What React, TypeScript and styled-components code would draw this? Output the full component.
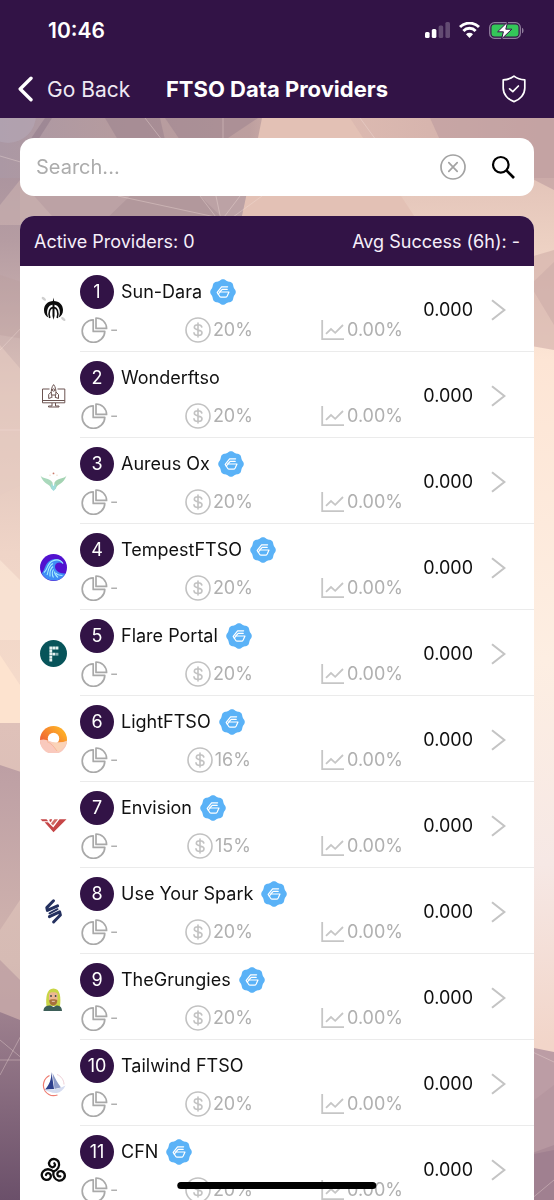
import React from 'react';
import styled, { createGlobalStyle } from 'styled-components';

const PURPLE = '#321346';

const GlobalStyle = createGlobalStyle`
  * { box-sizing: border-box; }
  body {
    margin: 0;
    background: #ecd3c8;
    font-family: Inter, 'Liberation Sans', sans-serif;
    color: #111;
  }
  button, input { font: inherit; color: inherit; }
  button { background: none; border: 0; padding: 0; cursor: pointer; }
  svg { display: block; flex: none; }
`;

const Screen = styled.div`
  height: 100vh;
  display: flex;
  flex-direction: column;
  overflow: hidden;
`;

const Backdrop = styled.div`
  position: fixed;
  inset: 0;
  z-index: -1;
  svg { width: 100%; height: 100%; }
`;

const TopBar = styled.header`
  background: ${PURPLE};
  color: #fff;
  flex: none;
`;

const StatusBar = styled.div`
  height: 60px;
  padding: 0 30px 0 48px;
  display: flex;
  align-items: center;
  justify-content: space-between;
  font-size: 21px;
  font-weight: 600;
`;

const StatusIcons = styled.div`
  display: flex;
  align-items: center;
  gap: 9px;
`;

const NavBar = styled.nav`
  height: 58px;
  padding: 0 18px;
  display: grid;
  grid-template-columns: 1fr auto 1fr;
  align-items: center;
`;

const BackButton = styled.button`
  justify-self: start;
  display: flex;
  align-items: center;
  gap: 14px;
  font-size: 21px;
  color: #efe8f3;
`;

const Title = styled.h1`
  margin: 0;
  font-size: 22px;
  font-weight: 700;
`;

const ShieldButton = styled.button`
  justify-self: end;
  margin-right: 10px;
`;

const Content = styled.main`
  flex: 1;
  min-height: 0;
  padding: 20px 20px 0;
  display: flex;
  flex-direction: column;
  gap: 20px;
  overflow-y: auto;
  scrollbar-width: none;
`;

const SearchBox = styled.form`
  flex: none;
  height: 58px;
  padding: 0 18px 0 16px;
  display: flex;
  align-items: center;
  gap: 25px;
  background: #fff;
  border-radius: 14px;
`;

const SearchInput = styled.input`
  flex: 1;
  min-width: 0;
  padding: 0;
  border: 0;
  outline: 0;
  background: none;
  font-size: 20px;
  &::placeholder { color: #acacac; opacity: 1; }
`;

const Card = styled.section`
  flex: none;
  background: #fff;
  border-radius: 14px 14px 0 0;
  overflow: hidden;
`;

const Summary = styled.div`
  height: 50px;
  padding: 0 14px;
  display: flex;
  align-items: center;
  justify-content: space-between;
  background: ${PURPLE};
  color: #f6effa;
  font-size: 18px;
`;

const List = styled.ul`
  margin: 0;
  padding: 0;
  list-style: none;
`;

const Row = styled.button`
  width: 100%;
  height: 86px;
  display: flex;
  text-align: left;
`;

const LogoCell = styled.span`
  flex: none;
  width: 60px;
  padding-left: 20px;
  align-self: center;
`;

const RowBody = styled.span`
  flex: 1;
  min-width: 0;
  height: 86px;
  padding-right: 28px;
  display: flex;
  align-items: center;
  border-bottom: 1px solid #ebebeb;
`;

const Details = styled.span`
  flex: 1;
  min-width: 0;
  display: flex;
  flex-direction: column;
  gap: 8px;
`;

const NameLine = styled.span`
  display: flex;
  align-items: center;
  font-size: 18px;
`;

const Rank = styled.span`
  width: 34px;
  height: 34px;
  margin-right: 7px;
  display: flex;
  align-items: center;
  justify-content: center;
  border-radius: 50%;
  background: ${PURPLE};
  color: #fff;
`;

const Name = styled.span`
  margin-right: 8px;
`;

const Stats = styled.span`
  display: grid;
  grid-template-columns: 30fr 26fr 44fr;
`;

const Stat = styled.span<{ $align: string }>`
  display: flex;
  align-items: center;
  justify-content: ${(p) => p.$align};
  gap: 2px;
  color: #b0b0b0;
  font-size: 18px;
`;

const Value = styled.span`
  width: 70px;
  padding-top: 2px;
  text-align: right;
  font-size: 18px;
`;

const ChevronCell = styled.span`
  margin-left: 18px;
  padding-top: 2px;
`;

const HomeIndicator = styled.div`
  position: fixed;
  left: 50%;
  bottom: 11px;
  width: 36%;
  height: 7px;
  transform: translateX(-50%);
  border-radius: 4px;
  background: #000;
`;

const Wallpaper = () => (
  <svg viewBox="0 0 554 1200" preserveAspectRatio="none" aria-hidden="true">
    <defs>
      <linearGradient id="wl" x1="0" y1="0" x2="0" y2="1">
        <stop offset="0.1" stopColor="#a48f9c" />
        <stop offset="0.2" stopColor="#b59ca2" />
        <stop offset="0.33" stopColor="#dcc2ba" />
        <stop offset="0.46" stopColor="#efd4c7" />
        <stop offset="0.6" stopColor="#f6dccb" />
      </linearGradient>
      <linearGradient id="wr" x1="0" y1="0" x2="0" y2="1">
        <stop offset="0.1" stopColor="#dbb9b1" />
        <stop offset="0.2" stopColor="#ecd0c2" />
        <stop offset="0.3" stopColor="#fde5d5" />
        <stop offset="0.55" stopColor="#fdeee2" />
        <stop offset="0.72" stopColor="#f6e8e5" />
        <stop offset="0.87" stopColor="#f2d5c9" />
      </linearGradient>
      <linearGradient id="wb" x1="0" y1="0" x2="0" y2="1">
        <stop offset="0" stopColor="#dfc1b9" />
        <stop offset="0.5" stopColor="#d6bbb4" />
        <stop offset="1" stopColor="#c3a3a5" />
      </linearGradient>
      <linearGradient id="wm" x1="0" y1="0" x2="0" y2="1">
        <stop offset="0" stopColor="#bd9fa4" />
        <stop offset="1" stopColor="#ceb1ad" />
      </linearGradient>
      <linearGradient id="wd" x1="0" y1="0" x2="0" y2="1">
        <stop offset="0" stopColor="#9d808e" />
        <stop offset="1" stopColor="#6b506a" />
      </linearGradient>
      <linearGradient id="top" x1="0" y1="0" x2="1" y2="0">
        <stop offset="0" stopColor="#ab98a4" />
        <stop offset="0.2" stopColor="#b59b9f" />
        <stop offset="0.45" stopColor="#bd9f9f" />
        <stop offset="0.55" stopColor="#dfbcb2" />
        <stop offset="1" stopColor="#cfaeaa" />
      </linearGradient>
    </defs>
    <rect width="277" height="1200" fill="url(#wl)" />
    <rect x="277" width="277" height="1200" fill="url(#wr)" />
    <rect y="118" width="554" height="60" fill="url(#top)" />
    <path d="M20 178H250L240 225H20z" fill="#bca2a5" />
    <path d="M250 178L262 118H350L420 225H240z" fill="#e3c1b5" />
    <path d="M0 205L20 180L60 225H0z" fill="#cbb2b0" opacity=".6" />
    <path d="M100 225L130 196H200L230 225z" fill="#a88e94" opacity=".5" />
    <path d="M105 118H160L165 140H118z" fill="#957d89" opacity=".45" />
    <path d="M165 118H258L225 140H180z" fill="#937b89" opacity=".4" />
    <circle cx="8" cy="115" r="28" fill="#b5a9ba" opacity=".5" />
    <path d="M45 118L30 140H38L52 118z" fill="#8d7788" opacity=".5" />
    <path d="M430 118H554V190L515 170L440 140z" fill="#bd9b9f" opacity=".6" />
    <path d="M520 260L554 250V350L520 344z" fill="#d2b1aa" opacity=".65" />
    <path d="M530 285L554 262V325z" fill="#c8a7a3" opacity=".45" />
    <path d="M0 275L30 285V340L0 335z" fill="#b99f9f" opacity=".35" />
    <path d="M0 345L30 380V480L0 495z" fill="#e6cbc1" opacity=".6" />
    <path d="M0 560L30 590V640H0z" fill="#fbe5d6" opacity=".7" />
    <path d="M0 655L30 700V723H0z" fill="#fde3cf" />
    <path d="M0 723H30V1200H0z" fill="url(#wb)" />
    <path d="M0 765L30 775V885L0 930z" fill="url(#wm)" />
    <path d="M0 960L30 990V1030L0 1012z" fill="#b5969d" opacity=".6" />
    <path d="M0 1012L30 1024V1200H0z" fill="url(#wd)" />
    <path d="M524 1046L554 1052V1200H524z" fill="#bc9da5" />
    <path d="M524 1156L554 1145V1200H524z" fill="#a08090" />
    <path d="M524 1108L554 1085V1150L524 1156z" fill="#b2939d" opacity=".6" />
    <g stroke="#f5e2dc" strokeWidth="1" fill="none" opacity=".35">
      <path d="M0 156L24 163M145 118L162 140M223 118V140M118 196L220 218M200 196L222 225M222 225L216 196M240 196L218 225M222 225L262 196" />
      <path d="M0 350L24 325M0 430H24M0 1040L24 1060M0 1075L24 1030M0 1060H24M524 1048L554 1062M530 1200L554 1180M360 118L376 140" />
    </g>
  </svg>
);

const SignalIcon = () => (
  <svg width="25" height="16" viewBox="0 0 25 16" fill="#fff" aria-hidden="true">
    <rect x="0" y="10" width="4.600" height="6" rx="1.500" />
    <rect x="6.800" y="7" width="4.600" height="9" rx="1.500" />
    <rect x="13.600" y="3.600" width="4.600" height="12.400" rx="1.500" opacity=".24" />
    <rect x="20.400" y="0" width="4.600" height="16" rx="1.500" opacity=".24" />
  </svg>
);

const WifiIcon = () => (
  <svg width="21" height="16" viewBox="0 0 21 16" fill="none" stroke="#fff" strokeWidth="2.900" aria-hidden="true">
    <path d="M1 5.100a13.400 13.400 0 0 1 19 0" />
    <path d="M4.400 8.900a8.400 8.400 0 0 1 12.200 0" />
    <path d="M10.500 15.900L7 12.300a5 5 0 0 1 7 0z" fill="#fff" stroke="none" />
  </svg>
);

const BatteryIcon = () => (
  <svg width="35" height="17" viewBox="0 0 35 17" aria-hidden="true">
    <rect x="0.700" y="0.700" width="30.600" height="15.600" rx="4.800" fill="none" stroke="#8f7d9c" strokeWidth="1.300" />
    <rect x="2.500" y="2.500" width="27" height="12" rx="3" fill="#34c759" />
    <path d="M33 5.700v5.600c2-.8 2-4.800 0-5.600z" fill="#8f7d9c" />
    <path d="M18.600 0L8.600 9.800h5.800L12.600 17L22.800 7.200h-6z" fill="#fff" stroke={PURPLE} strokeWidth="1" strokeLinejoin="round" />
  </svg>
);

const BackIcon = () => (
  <svg width="15" height="26" viewBox="0 0 15 26" fill="none" stroke="#fff" strokeWidth="3.400" strokeLinecap="round" strokeLinejoin="round" aria-hidden="true">
    <path d="M13 2.200L2.200 13L13 23.800" />
  </svg>
);

const ShieldIcon = () => (
  <svg width="24" height="28" viewBox="0 0 24 28" fill="none" stroke="#fff" strokeWidth="1.700" strokeLinecap="round" strokeLinejoin="round" aria-hidden="true">
    <path d="M12 1.200C9 3.500 5 4.700 1.200 4.900V13C1.200 19.500 6 24.500 12 26.600C18 24.500 22.800 19.500 22.800 13V4.900C19 4.700 15 3.500 12 1.200z" />
    <path d="M7.600 13.800L10.800 16.700L16.400 11" />
  </svg>
);

const ClearIcon = () => (
  <svg width="26" height="26" viewBox="0 0 26 26" fill="none" stroke="#a3a3a3" strokeWidth="1.700" strokeLinecap="round" aria-hidden="true">
    <circle cx="13" cy="13" r="12" />
    <path d="M8.800 8.600L17.200 17.400M17.200 8.600L8.800 17.400" />
  </svg>
);

const SearchIcon = () => (
  <svg width="25" height="25" viewBox="0 0 25 25" fill="none" stroke="#000" strokeWidth="2.200" aria-hidden="true">
    <circle cx="9.800" cy="9.800" r="7.800" />
    <path d="M15.400 15.400L23 23" strokeWidth="2.700" />
  </svg>
);

const PieIcon = () => (
  <svg width="28" height="26" viewBox="0 0 28 26" fill="none" stroke="#a9a9a9" strokeWidth="1.700" strokeLinejoin="round" aria-hidden="true">
    <path d="M13.200 2.800A11.300 11.300 0 1 0 24.800 14.400H13.200z" />
    <path d="M16 1V11.400H26.600A10.500 10.500 0 0 0 16 1z" />
  </svg>
);

const DollarIcon = () => (
  <svg width="26" height="26" viewBox="0 0 26 26" fill="none" stroke="#c2c2c2" strokeWidth="1.600" strokeLinecap="round" aria-hidden="true">
    <circle cx="13" cy="13" r="12" />
    <path d="M16.800 10C16.500 8.400 15 7.700 13 7.700C10.800 7.700 9.300 8.700 9.300 10.300C9.300 14 17 11.800 17 15.700C17 17.400 15.400 18.400 13.100 18.400C10.800 18.400 9.200 17.500 9 15.800M13 6V20" />
  </svg>
);

const TrendIcon = () => (
  <svg width="24" height="22" viewBox="0 0 24 22" fill="none" stroke="#c6c6c6" strokeWidth="1.800" aria-hidden="true">
    <path d="M1.200 1V20.200H23" />
    <path d="M5 14.800L10 10L14.200 13.800L22 6" />
  </svg>
);

const ChevronIcon = () => (
  <svg width="15" height="22" viewBox="0 0 15 22" fill="none" stroke="#c4c4c4" strokeWidth="2.100" aria-hidden="true">
    <path d="M1 1.200L13.400 11L1 20.800" />
  </svg>
);

const BADGE_POINTS = Array.from({ length: 96 }, (_, i) => {
  const angle = (i / 96) * Math.PI * 2;
  const radius = 12.2 + 0.6 * Math.cos(angle * 8);
  return `${(13 + radius * Math.sin(angle)).toFixed(2)},${(13 - radius * Math.cos(angle)).toFixed(2)}`;
}).join(' ');

const VerifiedBadge = () => (
  <svg width="26" height="26" viewBox="0 0 26 26" role="img" aria-label="Verified">
    <polygon points={BADGE_POINTS} fill="#5ab2f7" />
    <g fill="none" stroke="#fff" strokeWidth="1.200" strokeLinejoin="round" strokeLinecap="round">
      <path d="M17.600 7.800H11.600L7.200 13.400L8.400 15.400M17.200 10.400H12.200L9.800 13" />
      <path d="M9.800 13H19L17.200 17Q16.600 18.200 15.400 18.200H11.200Q10.200 18.200 9.600 17.200L8.400 15.200z" />
    </g>
  </svg>
);

const logos: Record<string, React.ReactNode> = {
  sundara: (
    <>
      <path d="M13.500 5C7.500 5 4 9.300 4 14C4 17.500 5.500 20.200 8.400 21.600C5.500 16 7.500 8.800 13.500 8.600C19.500 8.800 21.500 16 18.600 21.600C21.500 20.200 23 17.500 23 14C23 9.300 19.500 5 13.500 5z" fill="#0c0c0c" />
      <path d="M9.800 22C7.900 16 10 11.600 13.500 11.600C17 11.600 19.100 16 17.200 22" fill="none" stroke="#0c0c0c" strokeWidth="1.600" />
      <path d="M13.500 1.500L14.500 7V20L13.500 23.800L12.500 20V7z" fill="#0c0c0c" />
      <g fill="#cfcfcf"><ellipse cx="3.800" cy="2.800" rx="2.600" ry="1.300" transform="rotate(40 3.800 2.800)" /><ellipse cx="23.300" cy="23" rx="2.600" ry="1.300" transform="rotate(40 23.300 23)" /></g>
    </>
  ),
  wonder: (
    <g fill="none" stroke="#6b5350" strokeWidth="1">
      <path d="M9.500 7H2.500V20.800H24.800V7H17.500M2.500 18.500H24.800M12 21V24H8.500V25H19V24H15.500V21" />
      <path d="M13.600 2.600C11.600 5 11 8 11.400 13H15.800C16.200 8 15.600 5 13.600 2.600zM11.200 10L8.700 12.500V16.500L11.400 15.500M16 10L18.500 12.500V16.500L15.800 15.500M11.800 13V16M15.400 13V16" />
      <circle cx="13.600" cy="8" r="1.200" />
    </g>
  ),
  aureus: (
    <>
      <path d="M0.500 7.500C3 11.500 9 9 12.500 14.500L13.500 22L11 20.500C10.500 16 3.500 16.500 0.500 7.500z" fill="#a9d8bb" />
      <path d="M26.500 7.500C24 11.500 18 9 14.500 14.500L13.500 22L16 20.500C16.500 16 23.500 16.500 26.500 7.500z" fill="#a3d3b2" />
      <path d="M11 15.500L13.500 18L16 15.500L15.500 21L13.500 23L11.600 21z" fill="#9fdcdc" />
      <circle cx="13.500" cy="5.400" r="0.900" fill="#c97a6a" />
      <path d="M9.500 7.200h1M16.500 7.200h1" stroke="#e8c9a8" />
    </>
  ),
  tempest: (
    <>
      <circle cx="13.500" cy="13.500" r="13.500" fill="#5212cf" />
      <path d="M1.500 19C5 17.500 4 9.500 11 6C16 3.500 21 5.500 23.500 10C20.500 7.800 17 8 15.500 10.500C13.500 15 18 20 25.500 19.500A13.500 13.500 0 0 1 1.500 19z" fill="#3f8ef5" />
      <g fill="none" stroke="#a5ecff" strokeWidth="1.100">
        <path d="M4 18.500C8 15.500 6.500 10 12.500 7C17 5 21 6.500 23 9.500" />
        <path d="M7 21C8.500 18 7.500 12.500 13 9.500M10 22.500C9.500 18 10.500 14.500 13 12.500M13.500 23.500C11.500 20 12.500 17 13.500 15.500M18 23.500C15.500 21.500 14.500 19.500 14.500 17.500M22.500 21.500C19.500 21.500 17 20.500 16 19" />
      </g>
    </>
  ),
  flare: (
    <>
      <circle cx="13.500" cy="13.500" r="13.500" fill="#07545a" />
      <g fill="#e6f3f2">
        <path d="M9.400 6.600h2.800v2.800H9.400zM12.500 6.600h2.800v2.800h-2.800zM15.600 6.600h2.800v2.800h-2.800zM9.400 9.700h2.800v2.800H9.400zM9.400 12.800h2.800v2.800H9.400zM12.500 12.800h2.800v2.800h-2.800zM9.400 15.900h2.800v2.800H9.400zM9.400 19h2.800v2.400H9.400z" />
        <path d="M15.600 12.800h2.800v2.800h-2.800z" opacity=".6" />
      </g>
    </>
  ),
  light: (
    <>
      <defs>
        <linearGradient id="sun" x1="0" y1="1" x2="1" y2="0">
          <stop offset="0.200" stopColor="#ee5a35" />
          <stop offset="0.800" stopColor="#fdab28" />
        </linearGradient>
      </defs>
      <circle cx="13.500" cy="13.500" r="13.500" fill="url(#sun)" />
      <circle cx="13.500" cy="12.500" r="5.700" fill="#fff" />
      <path d="M0 14C6 12 9 15.500 14 16.500C18 17 22 16.500 27 15A13.500 13.500 0 0 1 0 14z" fill="#f9c9bd" />
      <path d="M10 15.500C13 17 15 22 18 26C21 24.500 26 20 27 15C22 16.500 15 17.500 10 15.500z" fill="#fad3b8" />
      <path d="M7 15.500C11 17 14 21 17 25" fill="none" stroke="#f6b48e" strokeWidth="0.800" />
    </>
  ),
  envision: (
    <g fill="#c64647">
      <path d="M0.500 7.200H6.500L8.200 9.200H2.400z" />
      <path d="M4.600 10.200H8L13.300 15.400L19.500 7.200H26.500L13.500 20.300z" />
      <path d="M9.600 7.200H12.200L10.800 10.200L9.400 9z" />
      <path d="M14.400 7.200H18L13 13.600L11 11.600z" fill="#d06a64" />
    </g>
  ),
  spark: (
    <g fill="none" stroke="#24305f" strokeWidth="3" strokeLinecap="round" strokeLinejoin="round">
      <path d="M13.500 2.800L6.800 9.600L7.400 12.400L17.600 7.800" />
      <path d="M9.400 18.600L19.600 13.800L20.400 17L13.600 24" />
      <path d="M9.500 15.300L17.500 11.200" strokeWidth="2" />
    </g>
  ),
  grungies: (
    <>
      <path d="M6.500 22C5.500 14 6.500 4.500 13.500 4.500C20.500 4.500 21 14 20 22z" fill="#c9d546" />
      <path d="M9 10C9 7.500 17.500 7.500 17.500 10V16C17.500 20 9 20 9 16z" fill="#edb793" />
      <path d="M9.300 16C10 15 16.500 15 17.200 16C17.500 20 15 21.500 13.300 21.500C11.500 21.500 9 20 9.300 16z" fill="#a8713c" />
      <path d="M11.800 17.300h3" stroke="#f5d6c4" strokeWidth="0.900" />
      <circle cx="11" cy="12" r="0.900" fill="#33434a" /><circle cx="15.600" cy="12" r="0.900" fill="#33434a" />
      <path d="M3.500 27C3.500 22.500 7 21.500 10.500 21.500L13.500 23L16.500 21.500C19 21.500 22 22.500 22 27z" fill="#3d5f58" />
    </>
  ),
  tailwind: (
    <>
      <path d="M9.500 5.500A11 11 0 0 0 5 21C8 25 13 26.500 17.500 25" fill="none" stroke="#ee7d72" strokeWidth="1.200" />
      <path d="M17 4.500C21 6 24 10 24 14.500" fill="none" stroke="#e9c3cc" strokeWidth="0.800" />
      <path d="M11.500 2C11.500 9 9.500 15 5 19.500L14 19z" fill="#2d3f8d" />
      <path d="M12.500 3C15 8 17.500 13 21 17.500L14.500 19z" fill="#8e9cc9" />
      <path d="M4 20.500C11 19.500 19 19.500 25.500 15.500C23.500 20 20 22.500 17 23C12 23.500 8 20.500 4 20.500z" fill="#d5dcf0" />
    </>
  ),
  cfn: (
    <g fill="none" stroke="#0a0a0a" strokeWidth="2.300" strokeLinecap="round">
      {[0, 120, 240].map((turn) => (
        <path key={turn} transform={`rotate(${turn} 13.500 15.500)`} d="M13.500 15.500C18 14 20 10 18.800 6.500C17.500 2.700 12.500 1.800 10 4.800C8 7.500 9.300 11 12.300 11.300C14.800 11.300 15.900 8.800 14.300 7.200" />
      ))}
    </g>
  ),
};

interface Provider {
  name: string;
  logo: string;
  fee: string;
  verified: boolean;
}

const providers: Provider[] = [
  { name: 'Sun-Dara', logo: 'sundara', fee: '20%', verified: true },
  { name: 'Wonderftso', logo: 'wonder', fee: '20%', verified: false },
  { name: 'Aureus Ox', logo: 'aureus', fee: '20%', verified: true },
  { name: 'TempestFTSO', logo: 'tempest', fee: '20%', verified: true },
  { name: 'Flare Portal', logo: 'flare', fee: '20%', verified: true },
  { name: 'LightFTSO', logo: 'light', fee: '16%', verified: true },
  { name: 'Envision', logo: 'envision', fee: '15%', verified: true },
  { name: 'Use Your Spark', logo: 'spark', fee: '20%', verified: true },
  { name: 'TheGrungies', logo: 'grungies', fee: '20%', verified: true },
  { name: 'Tailwind FTSO', logo: 'tailwind', fee: '20%', verified: false },
  { name: 'CFN', logo: 'cfn', fee: '20%', verified: true },
];

const ProviderRow = ({ provider, rank }: { provider: Provider; rank: number }) => (
  <li>
    <Row type="button">
      <LogoCell>
        <svg width="27" height="27" viewBox="0 0 27 27" aria-hidden="true">{logos[provider.logo]}</svg>
      </LogoCell>
      <RowBody>
        <Details>
          <NameLine>
            <Rank>{rank}</Rank>
            <Name>{provider.name}</Name>
            {provider.verified && <VerifiedBadge />}
          </NameLine>
          <Stats>
            <Stat $align="flex-start"><PieIcon />-</Stat>
            <Stat $align="center"><DollarIcon />{provider.fee}</Stat>
            <Stat $align="flex-end"><TrendIcon />0.00%</Stat>
          </Stats>
        </Details>
        <Value>0.000</Value>
        <ChevronCell><ChevronIcon /></ChevronCell>
      </RowBody>
    </Row>
  </li>
);

export default function App() {
  return (
    <Screen>
      <GlobalStyle />
      <Backdrop><Wallpaper /></Backdrop>
      <TopBar>
        <StatusBar>
          <span>10:46</span>
          <StatusIcons><SignalIcon /><WifiIcon /><BatteryIcon /></StatusIcons>
        </StatusBar>
        <NavBar>
          <BackButton type="button"><BackIcon />Go Back</BackButton>
          <Title>FTSO Data Providers</Title>
          <ShieldButton type="button" aria-label="Security"><ShieldIcon /></ShieldButton>
        </NavBar>
      </TopBar>
      <Content>
        <SearchBox role="search" onSubmit={(event) => event.preventDefault()}>
          <SearchInput type="text" placeholder="Search..." aria-label="Search providers" />
          <button type="reset" aria-label="Clear search"><ClearIcon /></button>
          <button type="submit" aria-label="Search"><SearchIcon /></button>
        </SearchBox>
        <Card>
          <Summary>
            <span>Active Providers: 0</span>
            <span>Avg Success (6h): -</span>
          </Summary>
          <List>
            {providers.map((provider, index) => (
              <ProviderRow key={provider.name} provider={provider} rank={index + 1} />
            ))}
          </List>
        </Card>
      </Content>
      <HomeIndicator />
    </Screen>
  );
}
